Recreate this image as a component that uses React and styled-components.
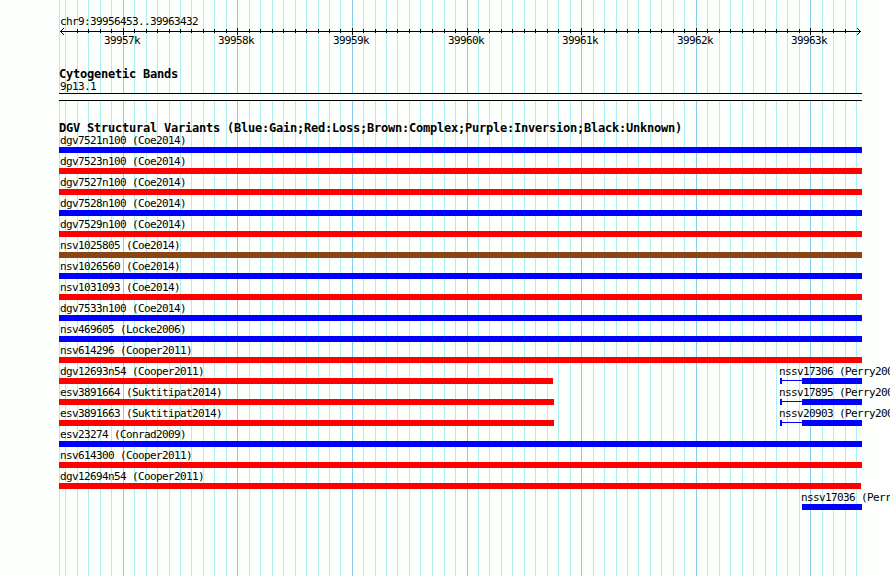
import React from "react";
import styled, { createGlobalStyle } from "styled-components";

const MAJOR = [123, 237, 352, 467, 581, 696, 810];
const MINOR = [
  65, 77, 88, 100, 111, 134, 146, 157, 169, 180, 191, 203, 214, 226,
  249, 260, 272, 283, 295, 306, 318, 329, 340, 363, 375, 386, 397, 409,
  420, 432, 444, 455, 478, 489, 501, 512, 524, 535, 547, 558, 570,
  593, 604, 616, 627, 638, 650, 661, 673, 684, 707, 719, 730, 742, 753,
  765, 776, 787, 799, 822, 833, 845, 856,
];

const START = 59;
const END = 862;

const BLUE = "#0000ff";
const RED = "#ff0000";
const BROWN = "#8b4513";

const variants = [
  [{ name: "dgv7521n100 (Coe2014)", color: BLUE }],
  [{ name: "dgv7523n100 (Coe2014)", color: RED }],
  [{ name: "dgv7527n100 (Coe2014)", color: RED }],
  [{ name: "dgv7528n100 (Coe2014)", color: BLUE }],
  [{ name: "dgv7529n100 (Coe2014)", color: RED }],
  [{ name: "nsv1025805 (Coe2014)", color: BROWN }],
  [{ name: "nsv1026560 (Coe2014)", color: BLUE }],
  [{ name: "nsv1031093 (Coe2014)", color: RED }],
  [{ name: "dgv7533n100 (Coe2014)", color: BLUE }],
  [{ name: "nsv469605 (Locke2006)", color: BLUE }],
  [{ name: "nsv614296 (Cooper2011)", color: RED }],
  [
    { name: "dgv12693n54 (Cooper2011)", color: RED, to: 553 },
    { name: "nssv17306 (Perry2008)", color: BLUE, from: 780, thick: 802 },
  ],
  [
    { name: "esv3891664 (Suktitipat2014)", color: RED, to: 554 },
    { name: "nssv17895 (Perry2008)", color: BLUE, from: 780, thick: 802 },
  ],
  [
    { name: "esv3891663 (Suktitipat2014)", color: RED, to: 554 },
    { name: "nssv20903 (Perry2008)", color: BLUE, from: 780, thick: 802 },
  ],
  [{ name: "esv23274 (Conrad2009)", color: BLUE }],
  [{ name: "nsv614300 (Cooper2011)", color: RED }],
  [{ name: "dgv12694n54 (Cooper2011)", color: RED, to: 861 }],
  [{ name: "nssv17036 (Perry2008)", color: BLUE, from: 802 }],
];

function Variant({ item, gap }) {
  const from = item.from || START;
  const to = item.to || END;
  return (
    <Feature $gap={gap} $width={to - from}>
      <Label $shift={from === START ? 1 : -1}>{item.name}</Label>
      <Glyph>
        {item.thick && (
          <>
            <Cap $color={item.color} />
            <Connector $color={item.color} />
          </>
        )}
        <Bar $color={item.color} $width={to - (item.thick || from)} />
      </Glyph>
    </Feature>
  );
}

function App() {
  return (
    <>
      <GlobalStyle />
      <Browser>
        <GridLines width="890" height="576" shapeRendering="crispEdges">
          {[START, ...MINOR].map((x) => (
            <rect key={x} x={x} y="0" width="1" height="576" fill="#afeeee" />
          ))}
          {MAJOR.map((x) => (
            <rect key={x} x={x} y="0" width="1" height="576" fill="#87ceeb" />
          ))}
        </GridLines>
        <Tracks>
          <Region>chr9:39956453..39963432</Region>
          <Axis width="803" height="9" viewBox="59 27 803 9" shapeRendering="crispEdges">
            <rect x="60" y="31" width="801" height="1" />
            {MINOR.slice(1, -1).map((x) => (
              <rect key={x} x={x} y="29" width="1" height="4" />
            ))}
            {MAJOR.map((x) => (
              <rect key={x} x={x} y="28" width="1" height="7" />
            ))}
            <path d="M61 30h1v1h-1z M62 29h1v1h-1z M63 28h1v1h-1z M61 32h1v1h-1z M62 33h1v1h-1z M63 34h1v1h-1z" />
            <path d="M859 30h1v1h-1z M858 29h1v1h-1z M857 28h1v1h-1z M859 32h1v1h-1z M858 33h1v1h-1z M857 34h1v1h-1z" />
          </Axis>
          <AxisLabels>
            {MAJOR.map((x, i) => (
              <AxisLabel key={x} $gap={i === 0 ? x - 19 - START : x - MAJOR[i - 1] - 36}>
                {39957 + i}k
              </AxisLabel>
            ))}
          </AxisLabels>
          <BandTitle>Cytogenetic Bands</BandTitle>
          <BandName>9p13.1</BandName>
          <Band />
          <VariantTitle>
            DGV Structural Variants (Blue:Gain;Red:Loss;Brown:Complex;Purple:Inversion;Black:Unknown)
          </VariantTitle>
          {variants.map((row) => (
            <Row key={row[0].name}>
              {row.map((item, i) => (
                <Variant
                  key={item.name}
                  item={item}
                  gap={(item.from || START) - (i === 0 ? START : row[i - 1].to)}
                />
              ))}
            </Row>
          ))}
        </Tracks>
      </Browser>
    </>
  );
}

const GlobalStyle = createGlobalStyle`
  body {
    margin: 0;
    background: #fdfffc;
    overflow: hidden;
  }
`;

const Browser = styled.main`
  position: relative;
  width: 890px;
  height: 576px;
  overflow: hidden;
  background: #fdfffc;
  color: #000;
  font-family: "DejaVu Sans Mono", monospace;
  font-size: 11px;
  letter-spacing: -0.622px;
  white-space: pre;
`;

const GridLines = styled.svg`
  position: absolute;
  top: 0;
  left: 0;
`;

const Tracks = styled.div`
  position: relative;
  display: flex;
  flex-direction: column;
  width: 803px;
  padding: 13px 0 0 59px;
`;

const Region = styled.div`
  height: 14px;
  line-height: 17px;
  padding-left: 1px;
`;

const Axis = styled.svg`
  display: block;
`;

const AxisLabels = styled.div`
  display: flex;
  height: 31px;
  line-height: 9px;
`;

const AxisLabel = styled.span`
  flex: none;
  width: 36px;
  margin-left: ${(props) => props.$gap}px;
`;

const Title = styled.h2`
  margin: 0;
  height: 15px;
  font-size: 12px;
  font-weight: bold;
  line-height: 15px;
  letter-spacing: -0.224px;
`;

const BandTitle = styled(Title)`
  height: 12px;
`;

const VariantTitle = styled(Title)`
  height: 11px;
  margin-top: 20px;
`;

const BandName = styled.div`
  height: 14px;
  line-height: 15px;
  padding-left: 1px;
`;

const Band = styled.div`
  box-sizing: border-box;
  height: 8px;
  border: solid #000;
  border-width: 1px 0;
  background: #fdfffc;
`;

const Row = styled.div`
  display: flex;
  height: 21px;
`;

const Feature = styled.div`
  flex: none;
  width: ${(props) => props.$width}px;
  margin-left: ${(props) => props.$gap}px;
`;

const Label = styled.div`
  height: 15px;
  line-height: 17px;
  text-indent: ${(props) => props.$shift}px;
`;

const Glyph = styled.div`
  display: flex;
  align-items: flex-start;
  height: 6px;
`;

const Bar = styled.div`
  width: ${(props) => props.$width}px;
  height: 6px;
  background: ${(props) => props.$color};
`;

const Cap = styled.div`
  width: 2px;
  height: 6px;
  background: ${(props) => props.$color};
`;

const Connector = styled.div`
  width: 20px;
  height: 1px;
  margin-top: 2px;
  background: ${(props) => props.$color};
`;

export default App;
